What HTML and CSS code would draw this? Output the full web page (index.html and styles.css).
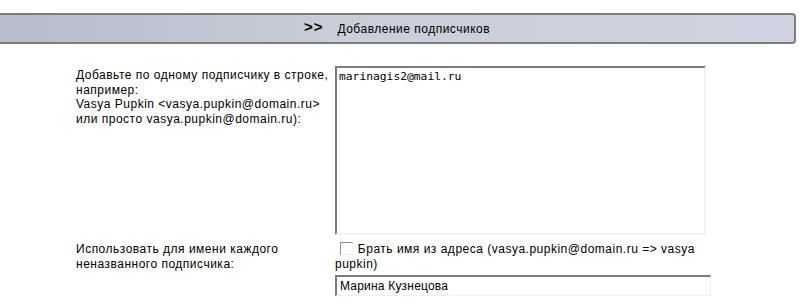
FILE: index.html
```html
<!DOCTYPE html>
<html lang="ru">
<head>
    <meta charset="UTF-8">
    <title>Добавление подписчиков</title>
    <link rel="stylesheet" href="styles.css">
</head>
<body>
    <div class="header">
        <span class="arrows">&gt;&gt;</span>
        <span class="title">Добавление подписчиков</span>
    </div>

    <form class="form">
        <label class="label" for="emails">Добавьте по одному подписчику в строке, например:<br>Vasya Pupkin &lt;vasya.pupkin@domain.ru&gt; или просто vasya.pupkin@domain.ru):</label>
        <div class="field">
            <textarea id="emails" class="emails">marinagis2@mail.ru</textarea>
        </div>

        <label class="label" for="name">Использовать для имени каждого неназванного подписчика:</label>
        <div class="field">
            <div class="check-line"><input type="checkbox" class="check" id="fromaddr"> Брать имя из адреса (vasya.pupkin@domain.ru =&gt; vasya pupkin)</div>
            <input type="text" id="name" class="name" value="Марина Кузнецова">
        </div>
    </form>
</body>
</html>
```

FILE: styles.css
```css
body {
    margin: 0;
    font-family: "Liberation Sans", Arial, sans-serif;
    font-size: 12px;
    letter-spacing: 0.5px;
    color: #000;
    background: #fff;
}
.header {
    margin-top: 13px;
    width: 794px;
    height: 27px;
    border-top: 2px solid #7c7c7c;
    border-bottom: 2px solid #7c7c7c;
    border-right: 2px solid #7c7c7c;
    border-radius: 0 4px 4px 0;
    background: linear-gradient(to right, #b6bcc8 0%, #c9ced9 45%, #d0d4e0 100%);
    display: flex;
    align-items: center;
    justify-content: center;
}
.arrows {
    font-weight: bold;
    font-size: 15px;
    letter-spacing: 1px;
    margin-right: 14px;
    margin-top: -4px;
}
.title {
    font-size: 12px;
}
.form {
    display: grid;
    grid-template-columns: 259px 376px;
    margin: 22px 0 0 76px;
    row-gap: 5px;
}
.label {
    display: block;
    padding-top: 2px;
    line-height: 14.5px;
    padding-right: 4px;
}
.emails {
    display: block;
    width: 371px;
    height: 169px;
    box-sizing: border-box;
    margin: 0;
    padding: 2px 2px;
    border-top: 2px solid #7b7b7b;
    border-left: 2px solid #7b7b7b;
    border-right: 2px solid #f1f1f1;
    border-bottom: 2px solid #f1f1f1;
    font-family: "DejaVu Sans Mono", "Liberation Mono", monospace;
    font-size: 11.3px;
    letter-spacing: 0;
    line-height: 14px;
    resize: none;
    outline: none;
}
.check-line {
    line-height: 15px;
    padding-top: 2px;
}
.check {
    appearance: none;
    -webkit-appearance: none;
    width: 13px;
    height: 13px;
    margin: 0 1px 0 5px;
    vertical-align: -2px;
    border-top: 1px solid #8a8a8a;
    border-left: 1px solid #8a8a8a;
    border-right: 1px solid #f0f0f0;
    border-bottom: 1px solid #f0f0f0;
    background: #fff;
    box-sizing: border-box;
}
.name {
    display: block;
    width: 376px;
    height: 21px;
    box-sizing: border-box;
    margin: 3px 0 0 0;
    padding: 1px 3px;
    border-top: 2px solid #7b7b7b;
    border-left: 2px solid #7b7b7b;
    border-right: 1px solid #f1f1f1;
    border-bottom: 1px solid #f1f1f1;
    font-family: "Liberation Sans", Arial, sans-serif;
    font-size: 12px;
    letter-spacing: 0.2px;
    outline: none;
}
```
